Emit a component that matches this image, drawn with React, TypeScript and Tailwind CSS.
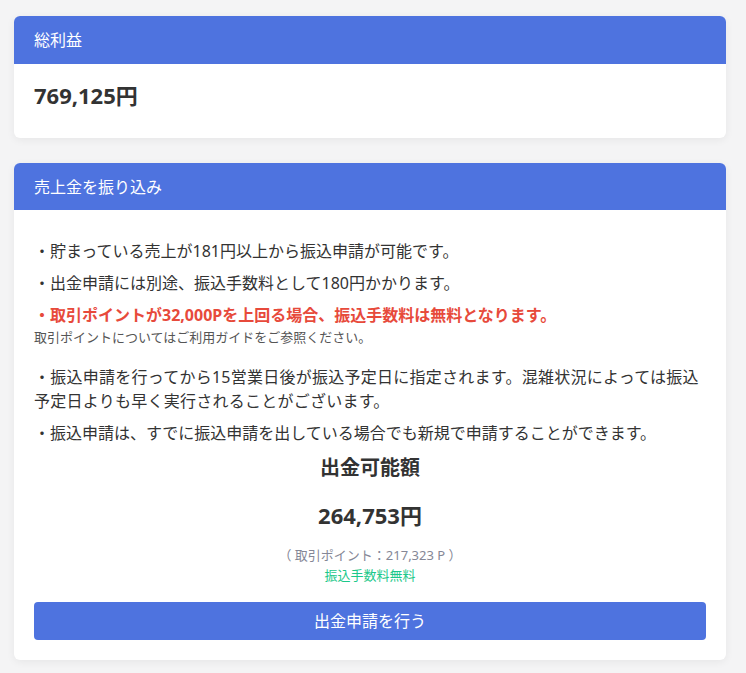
import React from "react";

const font = { fontFamily: '"Noto Sans", "Noto Sans CJK JP", sans-serif' };

const App = () => {
    return (
        <div className="min-h-screen bg-[#f4f4f5] pl-[14px] pr-5 pt-4 pb-3 text-[#333]" style={font}>
            <div className="rounded-md bg-white shadow-[0_2px_8px_rgba(0,0,0,0.06)] overflow-hidden">
                <div className="h-12 bg-[#4e73df] px-5 flex items-center text-white text-base">総利益</div>
                <div className="px-5 pt-4 pb-7">
                    <div className="text-[22px] font-bold leading-[30px] text-[#333]">769,125円</div>
                </div>
            </div>

            <div className="mt-[25px] rounded-md bg-white shadow-[0_2px_8px_rgba(0,0,0,0.06)] overflow-hidden">
                <div className="h-[47px] bg-[#4e73df] px-5 flex items-center text-white text-base">売上金を振り込み</div>
                <div className="px-5 pt-[29px] pb-5 text-base leading-6">
                    <p className="mb-2">・貯まっている売上が181円以上から振込申請が可能です。</p>
                    <p className="mb-2">・出金申請には別途、振込手数料として180円かかります。</p>
                    <p className="font-bold text-[#e74a3b]">・取引ポイントが32,000Pを上回る場合、振込手数料は無料となります。</p>
                    <p className="text-[13px] leading-5 text-[#555] mb-[18px]">取引ポイントについてはご利用ガイドをご参照ください。</p>
                    <p className="mb-2 tracking-[0.25px]">・振込申請を行ってから15営業日後が振込予定日に指定されます。混雑状況によっては振込予定日よりも早く実行されることがございます。</p>
                    <p>・振込申請は、すでに振込申請を出している場合でも新規で申請することができます。</p>

                    <div className="flex flex-col items-center">
                        <div className="mt-2 text-xl font-bold leading-[30px]">出金可能額</div>
                        <div className="mt-[16px] text-[22px] font-bold leading-[32px]">264,753円</div>
                        <div className="mt-[14px] text-[13px] leading-5 text-[#858796]">（ 取引ポイント：217,323 P ）</div>
                        <div className="text-[13px] leading-5 text-[#1cc88a]">振込手数料無料</div>
                    </div>

                    <button className="mt-[17px] w-full h-[38px] rounded bg-[#4e73df] text-white text-base">出金申請を行う</button>
                </div>
            </div>
        </div>
    );
};

export default App;
